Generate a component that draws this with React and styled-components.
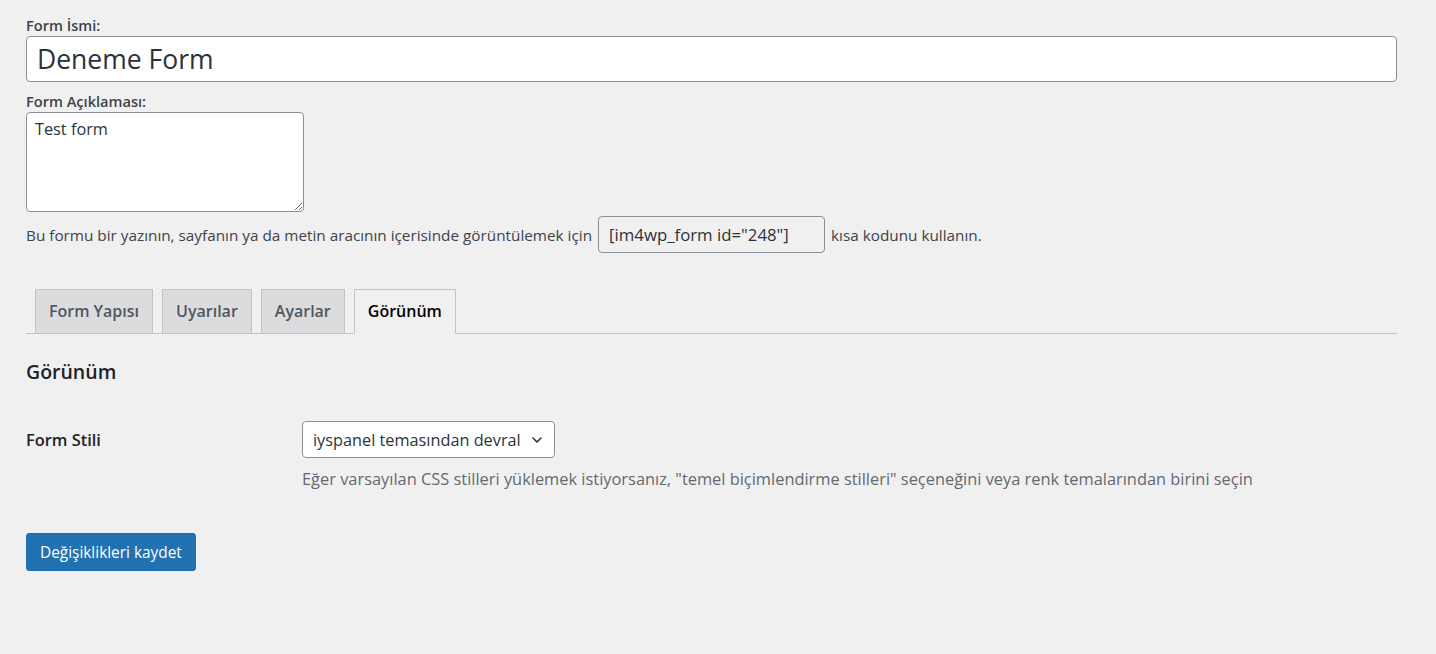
import React from "react";
import styled, { createGlobalStyle } from "styled-components";

const Global = createGlobalStyle`
  html, body { margin: 0; padding: 0; background: #f0f0f1; }
  body { font-family: "Open Sans", "Noto Sans", sans-serif; color: #3c434a; }
  * { box-sizing: border-box; }
`;

const Page = styled.div`
  padding: 14px 39px 40px 26px;
  min-height: 654px;
`;

const Label = styled.label`
  display: block;
  font-size: 14.6px;
  font-weight: 600;
  color: #3c434a;
  line-height: 22px;
`;

const TitleInput = styled.input`
  display: block;
  width: 100%;
  height: 46px;
  border: 1px solid #8c8f94;
  border-radius: 4px;
  background: #fff;
  padding: 0 10px;
  font-family: inherit;
  font-size: 26.5px;
  color: #2c3338;
  margin: 0 0 8px;
`;

const TextArea = styled.textarea`
  display: block;
  width: 278px;
  height: 100px;
  border: 1px solid #8c8f94;
  border-radius: 4px;
  background: #fff;
  padding: 4px 8px;
  font-family: inherit;
  font-size: 16.3px;
  line-height: 24px;
  color: #2c3338;
  resize: both;
`;

const ShortcodeRow = styled.p`
  display: flex;
  align-items: center;
  gap: 6px;
  margin: 4px 0 0;
  font-size: 15.3px;
  line-height: 22px;
  color: #3c434a;
`;

const CodeInput = styled.input`
  width: 227px;
  height: 37px;
  border: 1px solid #8c8f94;
  border-radius: 4px;
  background: #f0f0f1;
  padding: 0 10px;
  font-family: inherit;
  font-size: 16.8px;
  color: #2c3338;
`;

const TabBar = styled.nav`
  display: flex;
  gap: 9px;
  margin-top: 36px;
  padding-left: 9px;
  border-bottom: 1px solid #c3c4c7;
`;

const Tab = styled.a`
  display: block;
  height: 45px;
  line-height: 43px;
  padding: 0 13px;
  margin-bottom: -1px;
  font-size: 16px;
  font-weight: 600;
  text-decoration: none;
  color: ${p => (p.$active ? "#000" : "#50575e")};
  background: ${p => (p.$active ? "#f0f0f1" : "#dcdcde")};
  border: 1px solid #c3c4c7;
  border-bottom-color: ${p => (p.$active ? "#f0f0f1" : "#c3c4c7")};
`;

const Heading = styled.h2`
  margin: 24px 0 0;
  font-size: 19.5px;
  font-weight: 600;
  color: #1d2327;
`;

const SettingRow = styled.div`
  display: grid;
  grid-template-columns: 276px 1fr;
  margin-top: 36px;
`;

const RowLabel = styled.div`
  font-size: 16.4px;
  font-weight: 600;
  color: #1d2327;
  padding-top: 7px;
`;

const Select = styled.div`
  display: inline-flex;
  align-items: center;
  justify-content: space-between;
  gap: 8px;
  width: 253px;
  height: 37px;
  border: 1px solid #8c8f94;
  border-radius: 4px;
  background: #fff;
  padding: 0 9px 0 10px;
  font-size: 16.3px;
  color: #2c3338;
  white-space: nowrap;
`;

const Help = styled.p`
  margin: 9px 0 0;
  font-size: 16.4px;
  color: #646970;
`;

const Button = styled.button`
  display: block;
  margin-top: 43px;
  height: 38px;
  padding: 0 13px;
  background: #2271b1;
  border: 1px solid #2271b1;
  border-radius: 3px;
  color: #fff;
  font-family: inherit;
  font-size: 15.4px;
`;

const Chevron = () => (
  <svg width="16" height="16" viewBox="0 0 20 20" fill="none">
    <path d="M5 7.5l5 5 5-5" stroke="#2c3338" strokeWidth="2" strokeLinecap="round" strokeLinejoin="round" />
  </svg>
);

export default function App() {
  return (
    <>
      <Global />
      <Page>
        <Label>Form İsmi:</Label>
        <TitleInput defaultValue="Deneme Form" />
        <Label>Form Açıklaması:</Label>
        <TextArea defaultValue="Test form" />
        <ShortcodeRow>
          Bu formu bir yazının, sayfanın ya da metin aracının içerisinde görüntülemek için
          <CodeInput readOnly value={'[im4wp_form id="248"]'} />
          kısa kodunu kullanın.
        </ShortcodeRow>
        <TabBar>
          <Tab>Form Yapısı</Tab>
          <Tab>Uyarılar</Tab>
          <Tab>Ayarlar</Tab>
          <Tab $active>Görünüm</Tab>
        </TabBar>
        <Heading>Görünüm</Heading>
        <SettingRow>
          <RowLabel>Form Stili</RowLabel>
          <div>
            <Select>
              <span>iyspanel temasından devral</span>
              <Chevron />
            </Select>
            <Help>
              Eğer varsayılan CSS stilleri yüklemek istiyorsanız, "temel biçimlendirme stilleri" seçeneğini veya renk temalarından birini seçin
            </Help>
          </div>
        </SettingRow>
        <Button>Değişiklikleri kaydet</Button>
      </Page>
    </>
  );
}
